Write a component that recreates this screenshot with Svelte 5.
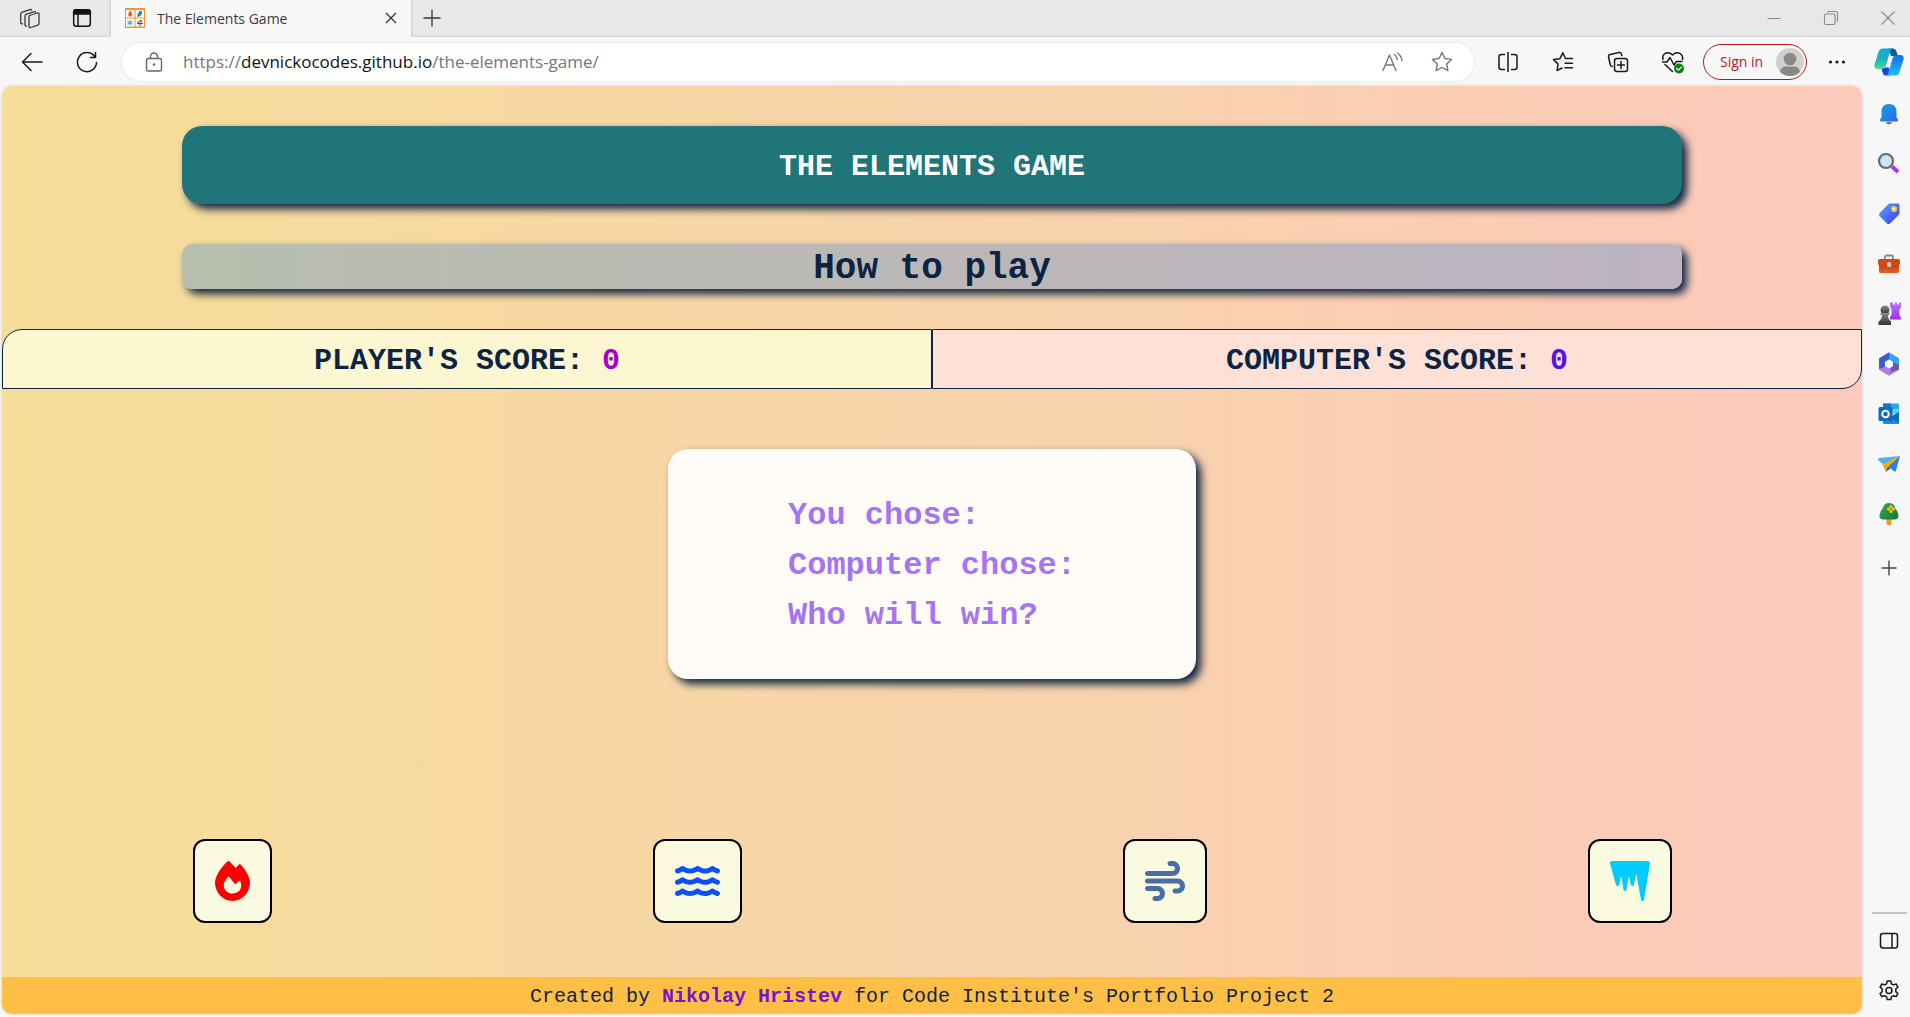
<script>
  let playerScore = $state(0);
  let computerScore = $state(0);

  const wave =
    'M269.5 69.9c11.1-7.9 25.9-7.9 37 0C329 85.4 356.5 96 384 96c26.9 0 55.4-10.8 77.4-26.1c11.9-8.5 28.1-7.8 39.2 1.7c14.4 11.9 32.5 21 50.6 25.2c17.2 4 27.9 21.2 23.9 38.4s-21.2 27.9-38.4 23.9c-24.5-5.7-44.9-16.5-58.2-25C449.5 149.7 417 160 384 160c-31.9 0-60.6-9.9-80.4-18.9c-5.8-2.7-11.1-5.3-15.6-7.7c-4.5 2.4-9.7 5.1-15.6 7.7c-19.8 9-48.5 18.9-80.4 18.9c-33 0-65.5-10.3-94.5-25.8c-13.4 8.4-33.7 19.3-58.2 25c-17.2 4-34.4-6.7-38.4-23.9s6.7-34.4 23.9-38.4C42.8 92.6 61 83.5 75.3 71.6c11.1-9.5 27.3-10.1 39.2-1.7C136.7 85.2 165.1 96 192 96c27.5 0 55-10.6 77.5-26.1z';

  const elements = [
    {
      name: 'Fire', width: 448, shifts: [0], kind: 'fire',
      path: 'M159.3 5.4c7.8-7.3 19.9-7.2 27.7 .1c27.6 25.9 53.5 53.8 77.7 84c11-14.4 23.5-30.1 37-42.9c7.9-7.4 20.1-7.4 28 .1c34.6 33 63.9 76.6 84.5 118c20.3 40.8 33.8 82.5 33.8 111.9C448 404.2 348.2 512 224 512C98.4 512 0 404.1 0 276.5c0-38.4 17.8-85.3 45.4-131.7C73.3 97.7 112.7 48.6 159.3 5.4zM225.7 416c25.3 0 47.7-7 68.8-21c42.1-29.4 53.4-88.2 28.1-134.4c-4.5-9-16-9.6-22.5-2l-25.2 29.3c-6.6 7.6-18.5 7.4-24.7-.5c-16.5-21-46-58.5-62.8-79.8c-6.3-8-18.3-8.1-24.7-.1c-33.8 42.5-50.8 69.3-50.8 99.4C112 375.4 162.6 416 225.7 416z'
    },
    { name: 'Water', width: 576, shifts: [0, 144, 288], kind: 'water', path: wave },
    {
      name: 'Air', width: 512, shifts: [0], kind: 'air',
      path: 'M288 32c0 17.7 14.3 32 32 32h32c17.7 0 32 14.3 32 32s-14.3 32-32 32H32c-17.7 0-32 14.3-32 32s14.3 32 32 32H352c53 0 96-43 96-96s-43-96-96-96H320c-17.7 0-32 14.3-32 32zm64 352c0 17.7 14.3 32 32 32h32c53 0 96-43 96-96s-43-96-96-96H32c-17.7 0-32 14.3-32 32s14.3 32 32 32H416c17.7 0 32 14.3 32 32s-14.3 32-32 32H384c-17.7 0-32 14.3-32 32zM128 512h32c53 0 96-43 96-96s-43-96-96-96H32c-17.7 0-32 14.3-32 32s14.3 32 32 32H160c17.7 0 32 14.3 32 32s-14.3 32-32 32H128c-17.7 0-32 14.3-32 32s14.3 32 32 32z'
    },
    {
      name: 'Ice', width: 512, shifts: [0], kind: 'ice',
      path: 'M75.8 304.8L1 35.7C.3 33.2 0 30.7 0 28.1C0 12.6 12.6 0 28.1 0H482.4C498.8 0 512 13.2 512 29.6c0 1.6-.1 3.3-.4 4.9L434.6 496.1c-1.5 9.2-9.5 15.9-18.8 15.9c-9.2 0-17.1-6.6-18.7-15.6L336 160 307.2 303.9c-1.9 9.3-10.1 16.1-19.6 16.1c-9.2 0-17.2-6.2-19.4-15.1L240 192 210.6 368.2c-1.5 9.1-9.4 15.8-18.6 15.8s-17.1-6.7-18.6-15.8L144 192 115.9 304.3c-2.3 9.2-10.6 15.7-20.1 15.7c-9.3 0-17.5-6.2-20-15.2z'
    }
  ];
</script>

<div class="window">
  <header class="tabstrip">
    <div class="strip-tools">
      <button class="icon" aria-label="Workspaces">
        <svg width="22" height="24" viewBox="0 0 22 24" fill="none" stroke="#3b3b3b" stroke-width="1.3" stroke-linejoin="round" stroke-linecap="round">
          <path d="M10.500 9.500l8-2.500q1.500-.4 1.500 1.200v9.300q0 1.300-1.200 1.700l-7 2.300q-1.800.5-1.800-1.200v-8.800q0-1.600.5-2z" />
          <path d="M7.500 20q-1.500.2-1.500-1.300V10.500q0-1.800 1.500-2.300l7.500-2.400q1.200-.3 1.500.5" />
          <path d="M3.500 17.800q-1.800 0-1.800-1.500V8.500q0-1.800 1.600-2.300L11 3.600q1.300-.3 1.700.5" />
        </svg>
      </button>
      <button class="icon" aria-label="Tab actions">
        <svg width="20" height="20" viewBox="0 0 20 20" fill="none" stroke="#111" stroke-width="1.500">
          <rect x="1.700" y="1.700" width="16.600" height="16.600" rx="2.500" />
          <path d="M1.700 6V4Q1.700 1.700 4 1.700h12q2.300 0 2.300 2.300v2z" fill="#111" />
          <path d="M6 6v12" />
        </svg>
      </button>
    </div>
    <div class="tab">
      <svg width="20" height="20" viewBox="0 0 20 20" aria-hidden="true">
        <rect width="20" height="20" fill="#f7902c" />
        <rect x="1" y="2" width="8.500" height="7.500" fill="#fff" />
        <rect x="10.500" y="2" width="8.500" height="7.500" fill="#fff" />
        <rect x="1" y="10.500" width="8.500" height="8" fill="#fff" />
        <rect x="10.500" y="10.500" width="8.500" height="8" fill="#fff" />
        <path d="M5 2.500q3 3 2 5-1 1.500-2 1.200T3 7q0-1.500 2-4.500z" fill="#ee5a24" />
        <path d="M12.500 8.500q-.5-3 2-5.500 2-.5 2.500 0 .5 3-1.500 5-1.500 1-3 .5z" fill="#2685c4" />
        <path d="M5 12v5.500M2.500 13.300l5 3M7.500 13.300l-5 3" stroke="#45b6d8" stroke-width="1.200" />
        <path d="M12 14h5M12 15.500h6M13.500 17h3M14.500 12.500h2.500" stroke="#555" stroke-width="1.200" />
      </svg>
      <span class="tab-title">The Elements Game</span>
      <button class="icon" aria-label="Close tab">
        <svg width="12" height="12" viewBox="0 0 12 12" stroke="#333" stroke-width="1.300"><path d="M1 1l10 10M11 1L1 11" /></svg>
      </button>
    </div>
    <button class="icon new-tab" aria-label="New tab">
      <svg width="18" height="18" viewBox="0 0 18 18" stroke="#333" stroke-width="1.300"><path d="M9 .5v17M.5 9h17" /></svg>
    </button>
    <div class="window-controls">
      <button class="icon" aria-label="Minimise">
        <svg width="16" height="16" viewBox="0 0 16 16" stroke="#8a8a8a" stroke-width="1"><path d="M1.500 8.500h13" /></svg>
      </button>
      <button class="icon" aria-label="Restore">
        <svg width="16" height="16" viewBox="0 0 16 16" fill="none" stroke="#8a8a8a" stroke-width="1.100"><rect x="1.500" y="4" width="10.500" height="10.500" rx="1.500" /><path d="M4.500 2.500Q5 1.500 6 1.500h6.500q2 0 2 2V10q0 1-1 1.500" /></svg>
      </button>
      <button class="icon" aria-label="Close window">
        <svg width="16" height="16" viewBox="0 0 16 16" stroke="#8a8a8a" stroke-width="1.100"><path d="M1.500 1.500l13 13M14.500 1.500l-13 13" /></svg>
      </button>
    </div>
  </header>

  <nav class="toolbar" aria-label="Browser toolbar">
    <div class="history">
      <button class="icon" aria-label="Back">
        <svg width="22" height="20" viewBox="0 0 22 20" fill="none" stroke="#1a1a1a" stroke-width="1.500" stroke-linecap="round"><path d="M1.500 10H21M10 1.500L1.500 10l8.500 8.500" /></svg>
      </button>
      <button class="icon" aria-label="Reload">
        <svg width="22" height="22" viewBox="0 0 22 22" fill="none" stroke="#1a1a1a" stroke-width="1.500" stroke-linecap="round" stroke-linejoin="round"><path d="M20.500 11.500A9.500 9.500 0 1 1 18.300 5M19.500 1.500v5h-5" /></svg>
      </button>
    </div>
    <div class="address">
      <button class="icon" aria-label="Site information">
        <svg width="18" height="20" viewBox="0 0 18 20" fill="none" stroke="#666" stroke-width="1.400"><rect x="1.500" y="6.500" width="15" height="12.500" rx="2" /><path d="M5.500 6.500V4.500a3.500 3.500 0 0 1 7 0v2" /><circle cx="9" cy="12.500" r="1.200" fill="#666" stroke="none" /></svg>
      </button>
      <a class="url" href="https://devnickocodes.github.io/the-elements-game/">https://<b>devnickocodes.github.io</b>/the-elements-game/</a>
      <div class="address-tools">
        <button class="icon" aria-label="Read aloud">
          <svg width="22" height="22" viewBox="0 0 22 22" fill="none" stroke="#767676" stroke-width="1.400" stroke-linecap="round" stroke-linejoin="round"><path d="M2 19.500L8.500 4l6.500 15.500M4.500 14h8M13.500 3.500q2.500 2 2.800 5M16.500 2q4 3 4.500 7.500" /></svg>
        </button>
        <button class="icon" aria-label="Add to favourites">
          <svg width="22" height="22" viewBox="0 0 22 22" fill="none" stroke="#767676" stroke-width="1.400" stroke-linejoin="round"><path d="M11 1.500l2.900 6 6.600.9-4.800 4.600 1.200 6.600L11 16.500l-5.900 3.100L6.300 13 1.500 8.400l6.600-.9z" /></svg>
        </button>
      </div>
    </div>
    <div class="actions">
      <button class="icon" aria-label="Split screen">
        <svg width="22" height="22" viewBox="0 0 22 22" fill="none" stroke="#1a1a1a" stroke-width="1.500"><path d="M8 3.500H4.500Q2 3.500 2 6v10q0 2.500 2.500 2.500H8M14 3.500h3.500Q20 3.500 20 6v10q0 2.500-2.500 2.500H14M11 1v20" /></svg>
      </button>
      <button class="icon" aria-label="Favourites">
        <svg width="22" height="22" viewBox="0 0 22 22" fill="none" stroke="#1a1a1a" stroke-width="1.500" stroke-linejoin="round" stroke-linecap="round"><path d="M13.500 7.500L10.800 1.800 7.900 7.700l-6.400.9 4.600 4.500-1.100 6.400 5-2.500M13.500 7.500h7M13 12.300h7.500M13 16.800h7.500" /></svg>
      </button>
      <button class="icon" aria-label="Collections">
        <svg width="22" height="22" viewBox="0 0 22 22" fill="none" stroke="#1a1a1a" stroke-width="1.500" stroke-linecap="round"><rect x="7.500" y="7.500" width="13" height="13" rx="2.500" /><path d="M14 10.500v7M10.500 14h7M5 15.500q-1.500-.5-1.800-2L1.600 6q-.3-2 1.600-2.500L12 1.600q2-.3 2.500 1.500l.3 1.500" /></svg>
      </button>
      <button class="icon" aria-label="Browser essentials">
        <svg width="24" height="24" viewBox="0 0 24 24" fill="none" stroke="#1a1a1a" stroke-width="1.500" stroke-linejoin="round" stroke-linecap="round"><path d="M2 9.500Q1 5.500 4 3.500q4-2 7.500 1.500Q15 1.500 19 3.500q3.500 2.500 2.500 6M4 14.500l7.500 7M1.500 12H6l3-4.500 4 7.500 2.500-3.500H21" /><circle cx="18" cy="18.500" r="5" fill="#107c10" stroke="none" /><path d="M15.700 18.500l1.700 1.600 3-3" stroke="#fff" stroke-width="1.300" /></svg>
      </button>
    </div>
    <button class="sign-in">
      Sign in
      <svg width="28" height="28" viewBox="0 0 28 28" aria-hidden="true"><circle cx="14" cy="14" r="14" fill="#d2d0ce" /><circle cx="14" cy="11" r="6.300" fill="#8a8886" /><path d="M4 24q1-5.500 6-5.500h8q5 0 6 5.500-4 4-10 4T4 24z" fill="#8a8886" /></svg>
    </button>
    <button class="icon more" aria-label="Settings and more">
      <svg width="18" height="6" viewBox="0 0 18 6" fill="#1a1a1a"><circle cx="2.500" cy="3" r="1.600" /><circle cx="9" cy="3" r="1.600" /><circle cx="15.500" cy="3" r="1.600" /></svg>
    </button>
    <button class="icon copilot" aria-label="Copilot">
      <svg width="30" height="28" viewBox="0 0 30 28">
        <defs>
          <linearGradient id="cpA" x1="0" y1="0" x2="0" y2="1"><stop offset="0" stop-color="#0fa4dc" /><stop offset=".6" stop-color="#1fb8b8" /><stop offset="1" stop-color="#54dc92" /></linearGradient>
          <linearGradient id="cpB" x1="0" y1="0" x2="0" y2="1"><stop offset="0" stop-color="#1a6fe0" /><stop offset="1" stop-color="#18bdfb" /></linearGradient>
        </defs>
        <path d="M14 .5h5q2.500 0 3.300 2.500L24 8h-7z" fill="#0c5a97" />
        <path d="M7 19.500l2 6q.6 2 2.500 2H16l-1-8z" fill="#1648d8" />
        <path d="M8.500.5H19q-2 0-3 3l-4 14q-1 3.500-4.500 3.500H4q-4.500 0-3.500-4.500L4.500 4q1-3.500 4-3.500z" fill="url(#cpA)" />
        <path d="M21.500 27.500H11.500q2 0 3-3l4-14q1-3.500 4.500-3.500h3q4.500 0 3.500 4.500L25.500 24q-1 3.500-4 3.500z" fill="url(#cpB)" />
      </svg>
    </button>
  </nav>

  <div class="body">
    <main class="game">
      <h1 class="title">THE ELEMENTS GAME</h1>
      <button class="how-to">How to play</button>

      <section class="scores" aria-label="Scores">
        <h2 class="score player">PLAYER'S SCORE: <span>{playerScore}</span></h2>
        <h2 class="score computer">COMPUTER'S SCORE: <span>{computerScore}</span></h2>
      </section>

      <section class="result" aria-live="polite">
        <p>You chose:</p>
        <p>Computer chose:</p>
        <p>Who will win?</p>
      </section>

      <div class="choices">
        {#each elements as el}
          <button class="choice {el.kind}" aria-label={el.name}>
            <svg viewBox="0 0 {el.width} 512" fill="currentColor">
              {#each el.shifts as dy}
                <path d={el.path} transform="translate(0 {dy})" />
              {/each}
            </svg>
          </button>
        {/each}
      </div>

      <footer class="credits">
        <p>Created by <a href="https://github.com/devnickocodes">Nikolay Hristev</a> for Code Institute's Portfolio Project 2</p>
      </footer>
    </main>

    <aside class="sidebar" aria-label="Browser sidebar">
      <svg width="0" height="0" class="defs" aria-hidden="true">
        <defs>
          <linearGradient id="blue" x1="0" y1="0" x2="1" y2="1"><stop offset="0" stop-color="#10a0d8" /><stop offset="1" stop-color="#3467f5" /></linearGradient>
          <linearGradient id="tag" x1="0" y1="0" x2="1" y2="1"><stop offset="0" stop-color="#5ea6fa" /><stop offset="1" stop-color="#3838f5" /></linearGradient>
          <linearGradient id="purple" x1="0" y1="0" x2="0" y2="1"><stop offset="0" stop-color="#b877f8" /><stop offset="1" stop-color="#a32bf2" /></linearGradient>
          <linearGradient id="grey" x1="0" y1="0" x2="0" y2="1"><stop offset="0" stop-color="#8a8a8a" /><stop offset="1" stop-color="#333" /></linearGradient>
          <linearGradient id="green" x1="0" y1="0" x2="1" y2="1"><stop offset="0" stop-color="#3aaa4c" /><stop offset="1" stop-color="#0c7a3c" /></linearGradient>
          <linearGradient id="case" x1="0" y1="0" x2="0" y2="1"><stop offset="0" stop-color="#b83c14" /><stop offset="1" stop-color="#e8621c" /></linearGradient>
        </defs>
      </svg>
      <button class="side" aria-label="Notifications">
        <svg width="24" height="24" viewBox="0 0 24 24"><path d="M9 20h6q-.5 2.500-3 2.500T9 20z" fill="#777" /><path d="M12 2q7.500 0 7.500 8v5.500l1.500 2q.5 2-1 2H4q-1.500 0-1-2l1.500-2V10q0-8 7.500-8z" fill="url(#blue)" /></svg>
      </button>
      <button class="side" aria-label="Search">
        <svg width="24" height="24" viewBox="0 0 24 24"><path d="M15 14.500l6 5.500" stroke="#b030f0" stroke-width="4" /><circle cx="9" cy="9" r="7" fill="#c5e6fb" stroke="#6a6a6a" stroke-width="2.200" /></svg>
      </button>
      <button class="side" aria-label="Shopping">
        <svg width="24" height="24" viewBox="0 0 24 24"><path d="M13 1.500h8q1.500 0 1.500 1.500v8q0 1-1 2l-8.500 8.500q-1.500 1-3 0L2.500 14q-1-1.500 0-3L11 2.500q1-1 2-1z" fill="url(#tag)" /><circle cx="17" cy="7" r="2.200" fill="#fff" stroke="#f8c41c" stroke-width="1.800" /></svg>
      </button>
      <button class="side" aria-label="Tools">
        <svg width="24" height="24" viewBox="0 0 24 24"><path d="M8 8V5q0-1.500 1.500-1.500h5Q16 3.500 16 5v3" fill="none" stroke="#888" stroke-width="1.800" /><rect x="2" y="11" width="20" height="10" rx="1.500" fill="url(#case)" /><rect x="1" y="7" width="22" height="6" rx="1.500" fill="#d1481c" /><rect x="10.200" y="10" width="4" height="5" rx="1.500" fill="#c9c9c9" /></svg>
      </button>
      <button class="side" aria-label="Games">
        <svg width="24" height="24" viewBox="0 0 24 24"><path d="M14 .5h2v2h2v-2h2v2h2v-2h2v5q-1.500 1-1.500 2.500v5l1.500 3v1.500H13V15l1.500-2V8q0-2-1.500-3V.5z" fill="url(#purple)" /><circle cx="8" cy="8" r="4.500" fill="url(#grey)" /><path d="M3.500 11h9v2H11q0 4 3 6.500v3.500H1.500v-3.500q3.500-2.500 3.500-6.500H3.500z" fill="url(#grey)" /></svg>
      </button>
      <button class="side" aria-label="Microsoft 365">
        <svg width="24" height="24" viewBox="0 0 24 24"><path d="M12 .5l10 6v11l-10 6-10-6v-11z" fill="#6f74dc" /><path d="M12 .5l10 6V14L16 10.500 9 6.500 7 4z" fill="#37a3ee" /><path d="M2 6.500L12 .5v7L8 10v8L2 15z" fill="#3b5fc4" /><path d="M22 17.500l-10 6-10-6 6-3 6 3 8-4z" fill="#b07bdc" /><path d="M16 10l6 3v4.500L14 20v-4z" fill="#7452a8" /><path d="M12 7.500l4 2.200v4.600l-4 2.200-4-2.200V9.700z" fill="#f7f7f7" /></svg>
      </button>
      <button class="side" aria-label="Outlook">
        <svg width="24" height="24" viewBox="0 0 24 24"><path d="M6 1.500h15q1 0 1 1V12H6z" fill="#28a8ea" /><path d="M6 1.500h8V7H6z" fill="#0f78d4" /><path d="M14 7h8v5h-8z" fill="#50d9ff" /><path d="M6 12l8 3 8-5v11q0 1-1 1H7q-1 0-1-1z" fill="#1490df" /><path d="M22 10v11L13 15z" fill="#0a6cc0" /><rect x="1.500" y="5" width="14" height="14" rx="1.500" fill="#0f6cbd" /><circle cx="8.500" cy="12" r="3.300" fill="none" stroke="#fff" stroke-width="2" /></svg>
      </button>
      <button class="side" aria-label="Drop">
        <svg width="24" height="24" viewBox="0 0 24 24"><path d="M1 8q-.5-1.500 1-2L23 4 7 13z" fill="#48b2f5" /><path d="M23 4L10 13.500l7.500 6q1 .5 1.500-1z" fill="#2b7fee" /><path d="M23 4L5.500 12l3 7.500 3-5z" fill="#f5a81c" /><path d="M8.500 20l2.500-5.500 2.500 2z" fill="#1d5fc8" /></svg>
      </button>
      <button class="side" aria-label="Tree">
        <svg width="24" height="24" viewBox="0 0 24 24"><rect x="9.500" y="15" width="5" height="8" rx="1.500" fill="#f59a23" /><path d="M12 1q5 0 6 5 3 3 3.500 7 .5 4.500-4 4.500h-11q-4.500 0-4-4.500Q3 9 6 6q1-5 6-5z" fill="url(#green)" /><path d="M14 4.500v5M11.500 7h5" stroke="#f8c41c" stroke-width="3" stroke-linecap="round" /><circle cx="14" cy="7" r="1.300" fill="#d9791a" /></svg>
      </button>
      <button class="side add" aria-label="Customise sidebar">
        <svg width="16" height="16" viewBox="0 0 16 16" stroke="#444" stroke-width="1.400"><path d="M8 .5v15M.5 8h15" /></svg>
      </button>
      <hr />
      <button class="side" aria-label="Toggle sidebar">
        <svg width="20" height="18" viewBox="0 0 20 18" fill="none" stroke="#1a1a1a" stroke-width="1.500"><rect x="1.500" y="1.500" width="17" height="14.500" rx="2.500" /><path d="M13 1.500V16" /></svg>
      </button>
      <button class="side" aria-label="Settings">
        <svg width="24" height="24" viewBox="0 0 24 24" fill="none" stroke="#1a1a1a" stroke-width="1.500" stroke-linejoin="round"><path d="M10.200 2h3.600l.6 2.800 2 1.100 2.700-.9 1.800 3.100-2.100 1.900v2.600l2.100 1.900-1.800 3.100-2.700-.9-2 1.200-.6 2.700h-3.600l-.6-2.700-2-1.200-2.700.9-1.800-3.100 2.100-1.900V10L3.100 8.100 4.900 5l2.700.9 2-1.100z" /><circle cx="12" cy="11.500" r="3" /></svg>
      </button>
    </aside>
  </div>
</div>

<style>
  :global(body) { margin: 0; background: #f7f7f7; }

  .window {
    min-height: 100vh;
    display: flex;
    flex-direction: column;
    background: #f7f7f7;
    font-family: "Open Sans", "Noto Sans", sans-serif;
  }
  button { font: inherit; cursor: pointer; }
  h1, h2, p { margin: 0; }
  svg { display: block; flex: none; }

  .icon {
    display: grid;
    place-items: center;
    width: 32px;
    height: 32px;
    padding: 0;
    border: 0;
    background: none;
  }

  .tabstrip {
    display: flex;
    height: 37px;
    background: #e8e8e8;
  }
  .strip-tools {
    display: flex;
    align-items: center;
    gap: 20px;
    width: 111px;
    box-sizing: border-box;
    padding-left: 14px;
    border-bottom: 1px solid #d4d4d4;
    border-bottom-right-radius: 6px;
  }
  .tab {
    display: flex;
    align-items: center;
    gap: 12px;
    width: 300px;
    box-sizing: border-box;
    padding: 0 4px 1px 14px;
    background: #f7f7f7;
    box-shadow: 0 0 3px #00000038;
    clip-path: inset(0 -4px 0 -4px);
  }
  .tab-title { flex: 1; font-size: 14px; color: #3c3c3c; }
  .new-tab { height: 37px; width: 42px; border-bottom: 1px solid #d4d4d4; border-bottom-left-radius: 6px; }
  .window-controls {
    display: flex;
    flex: 1;
    justify-content: flex-end;
    align-items: center;
    gap: 25px;
    padding-right: 6px;
    border-bottom: 1px solid #d4d4d4;
  }

  .toolbar {
    display: flex;
    align-items: center;
    height: 49px;
  }
  .history { display: flex; gap: 23px; padding: 0 19px 0 16px; }
  .address {
    display: flex;
    align-items: center;
    flex: 1;
    height: 38px;
    box-sizing: border-box;
    padding: 0 16px;
    border-radius: 19px;
    background: #fff;
    box-shadow: 0 0 3px #0000001a;
  }
  .url {
    flex: 1;
    padding-left: 13px;
    font-size: 17px;
    color: #767676;
    text-decoration: none;
  }
  .url b { font-weight: 400; color: #111; }
  .address-tools { display: flex; gap: 18px; }
  .actions { display: flex; gap: 23px; padding: 0 14px 0 18px; }
  .sign-in {
    display: flex;
    align-items: center;
    justify-content: space-between;
    width: 104px;
    height: 36px;
    padding: 0 2px 0 16px;
    border: 1px solid #b01b1b;
    border-radius: 18px;
    background: none;
    color: #b01b1b;
    font-size: 14px;
  }
  .more { margin: 0 20px 0 14px; }
  .copilot { margin-right: 5px; }

  .body { display: flex; flex: 1; }

  .game {
    display: flex;
    flex-direction: column;
    align-items: center;
    flex: 1;
    margin: 0 0 3px 2px;
    overflow: hidden;
    border-radius: 10px;
    background: linear-gradient(to right, #f6de99, #f8d3ab 54%, #fcc9bc);
    box-shadow: 0 0 3px #00000030;
    color: #0c2442;
    font-family: "Liberation Mono", monospace;
  }
  .title, .how-to {
    width: 1500px;
    max-width: 90%;
    box-sizing: border-box;
    margin-top: 40px;
    box-shadow: 5px 5px 8px #0c2442;
    text-align: center;
    font-weight: 700;
  }
  .title {
    padding: 20px 0 16px;
    border-radius: 20px;
    background: #1f7578;
    color: #fff;
    font-size: 30px;
    line-height: 42px;
  }
  .how-to {
    padding: 4px 0 0;
    border: 0;
    border-radius: 10px;
    background: linear-gradient(to right, #b8bfae, #bbb8b8 50%, #bdb3c1);
    color: #0c2442;
    font-size: 36px;
    line-height: 41px;
  }
  .scores { display: flex; align-self: stretch; margin-top: 40px; }
  .score {
    flex: 1;
    padding-top: 4px;
    border: 1px solid #0c2442;
    text-align: center;
    font-size: 30px;
    line-height: 54px;
  }
  .player { border-top-left-radius: 20px; background: #fcf7d0; }
  .player span { color: #a800c8; }
  .computer { border-bottom-right-radius: 20px; background: #fde0d6; }
  .computer span { color: #5a0ff0; }

  .result {
    margin: 60px 0;
    padding: 42px 120px 38px;
    border-radius: 20px;
    background: #fffbf6;
    box-shadow: 5px 5px 8px #0c2442;
    color: #a674f2;
    font-size: 32px;
    font-weight: 700;
    line-height: 50px;
  }

  .choices {
    display: flex;
    justify-content: space-around;
    align-self: stretch;
    margin-top: auto;
    padding-bottom: 54px;
  }
  .choice {
    padding: 20px;
    border: 2px solid #000;
    border-radius: 12px;
    background: #fafae0;
  }
  .choice svg { height: 40px; }
  .fire { color: #f00; }
  .water { color: #0a50f5; }
  .air { color: #4a6da7; }
  .ice { color: #0cf; }

  .credits {
    align-self: stretch;
    padding-top: 2px;
    background: #ffbf47;
    text-align: center;
    font-size: 20px;
    line-height: 35px;
  }
  .credits a { color: #7318c8; font-weight: 700; text-decoration: none; }

  .sidebar {
    display: flex;
    flex-direction: column;
    align-items: center;
    width: 42px;
    padding: 3px 0 1px 6px;
  }
  .defs { position: absolute; }
  .side {
    display: grid;
    place-items: center;
    width: 42px;
    height: 50px;
    padding: 0;
    border: 0;
    background: none;
  }
  .add { margin-top: 4px; }
  .sidebar hr {
    width: 35px;
    margin: auto 0 2px;
    border: 0;
    border-top: 2px solid #c4c4c4;
  }
</style>
